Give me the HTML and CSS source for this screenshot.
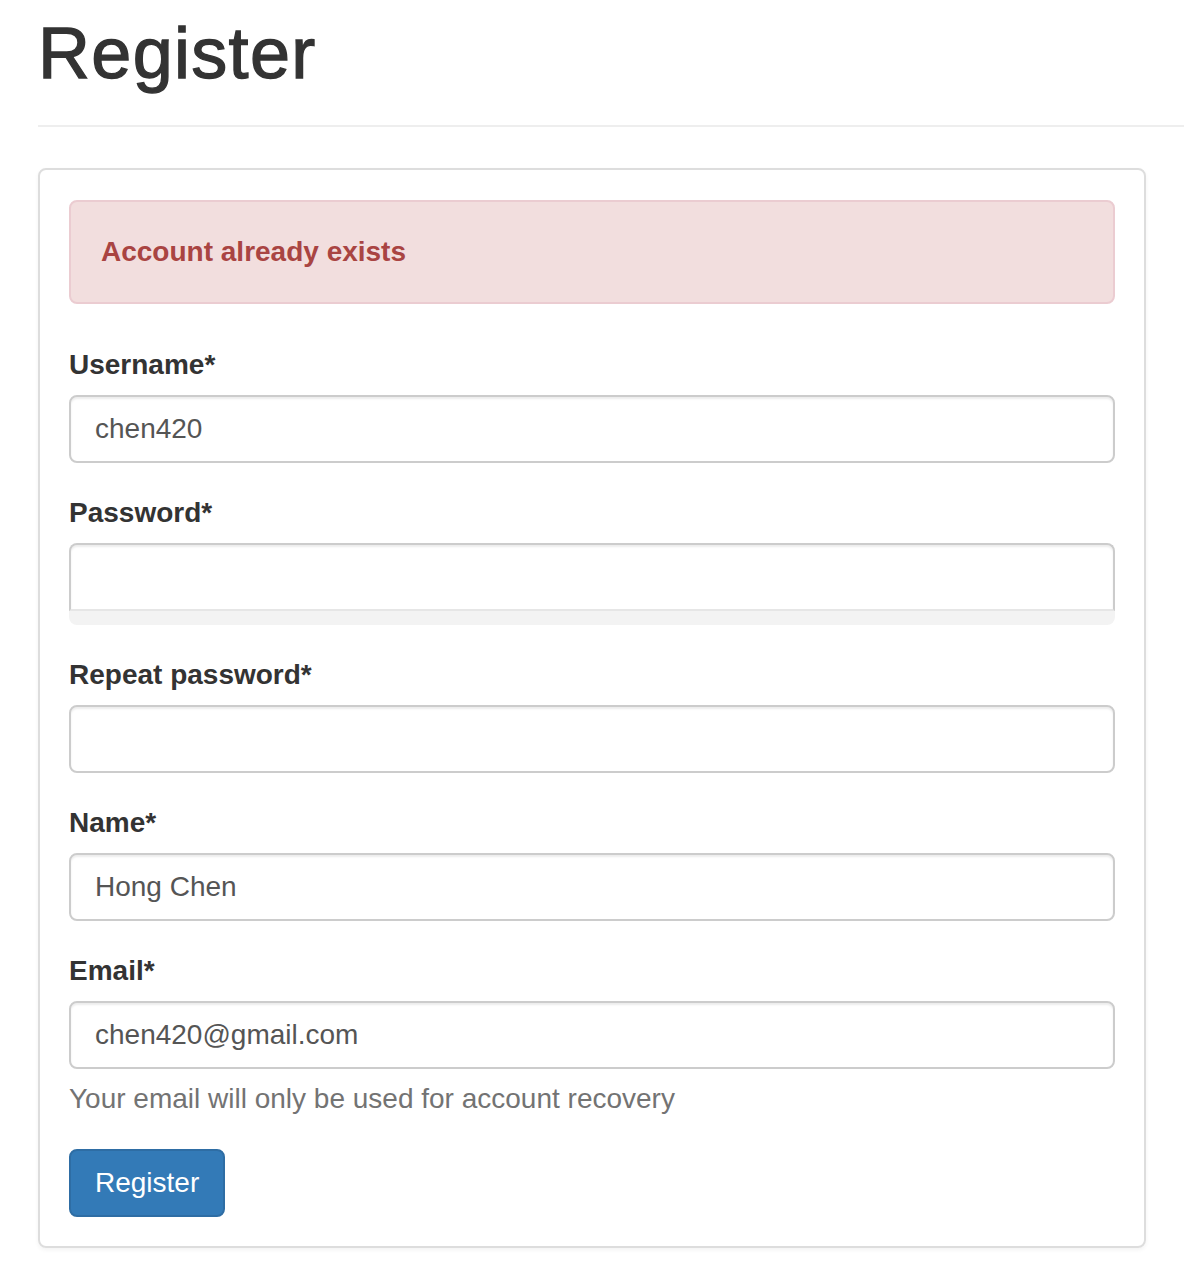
FILE: index.html
```html
<!DOCTYPE html>
<html lang="en">
<head>
    <meta charset="UTF-8">
    <title>Register</title>
    <link rel="stylesheet" href="styles.css">
</head>
<body>
<div class="page">
    <div class="page-header">
        <h1>Register</h1>
    </div>
    <div class="panel">
        <div class="alert">Account already exists</div>
        <form>
            <div class="form-group">
                <label for="username">Username*</label>
                <input type="text" id="username" class="form-control" value="chen420">
            </div>
            <div class="form-group">
                <label for="password">Password*</label>
                <div class="pw-wrap">
                    <input type="password" id="password" class="form-control pw">
                    <div class="pw-strip"></div>
                </div>
            </div>
            <div class="form-group">
                <label for="password2">Repeat password*</label>
                <input type="password" id="password2" class="form-control">
            </div>
            <div class="form-group">
                <label for="name">Name*</label>
                <input type="text" id="name" class="form-control" value="Hong Chen">
            </div>
            <div class="form-group">
                <label for="email">Email*</label>
                <input type="email" id="email" class="form-control" value="chen420@gmail.com">
                <p class="help-block">Your email will only be used for account recovery</p>
            </div>
            <button type="button" class="btn">Register</button>
        </form>
    </div>
</div>
</body>
</html>
```

FILE: styles.css
```css
* {
    margin: 0;
    padding: 0;
    box-sizing: border-box;
}

body {
    font-family: "Liberation Sans", Arial, Helvetica, sans-serif;
    font-size: 28px;
    line-height: 40px;
    color: #333;
    background: #fff;
}

.page {
    padding-left: 38px;
}

.page-header {
    padding-bottom: 32px;
    border-bottom: 2px solid #eee;
    margin-bottom: 41px;
}

.page-header h1 {
    margin-top: 14px;
    font-size: 72px;
    line-height: 79px;
    font-weight: 500;
    letter-spacing: 1.3px;
    color: #333;
    -webkit-text-stroke: 1.3px #333;
}

.panel {
    width: 1108px;
    border: 2px solid #ddd;
    border-radius: 8px;
    padding: 30px 29px 29px;
    box-shadow: 0 2px 4px rgba(0, 0, 0, 0.05);
    margin-bottom: 36px;
}

.alert {
    background: #f2dede;
    border: 2px solid #ebccd1;
    border-radius: 8px;
    color: #a94442;
    font-weight: bold;
    padding: 30px 30px;
    margin-bottom: 41px;
}

.form-group {
    margin-bottom: 30px;
}

.form-group label {
    display: block;
    font-weight: bold;
    margin-bottom: 10px;
}

.form-control {
    display: block;
    width: 100%;
    height: 68px;
    padding: 12px 24px;
    font-family: inherit;
    font-size: 28px;
    color: #555;
    background: #fff;
    border: 2px solid #ccc;
    border-radius: 8px;
    box-shadow: inset 0 2px 2px rgba(0, 0, 0, 0.075);
    outline: none;
}

.pw-wrap .pw {
    border-radius: 8px 8px 0 0;
    border-bottom-color: #e6e6e6;
}

.pw-strip {
    height: 14px;
    background: #f3f3f3;
    border-radius: 0 0 8px 8px;
}

.help-block {
    margin-top: 10px;
    margin-bottom: 20px;
    color: #737373;
}

.btn {
    display: inline-block;
    padding: 12px 24px;
    font-family: inherit;
    font-size: 28px;
    line-height: 40px;
    color: #fff;
    background: #337ab7;
    border: 2px solid #2e6da4;
    border-radius: 8px;
    cursor: pointer;
}
```
